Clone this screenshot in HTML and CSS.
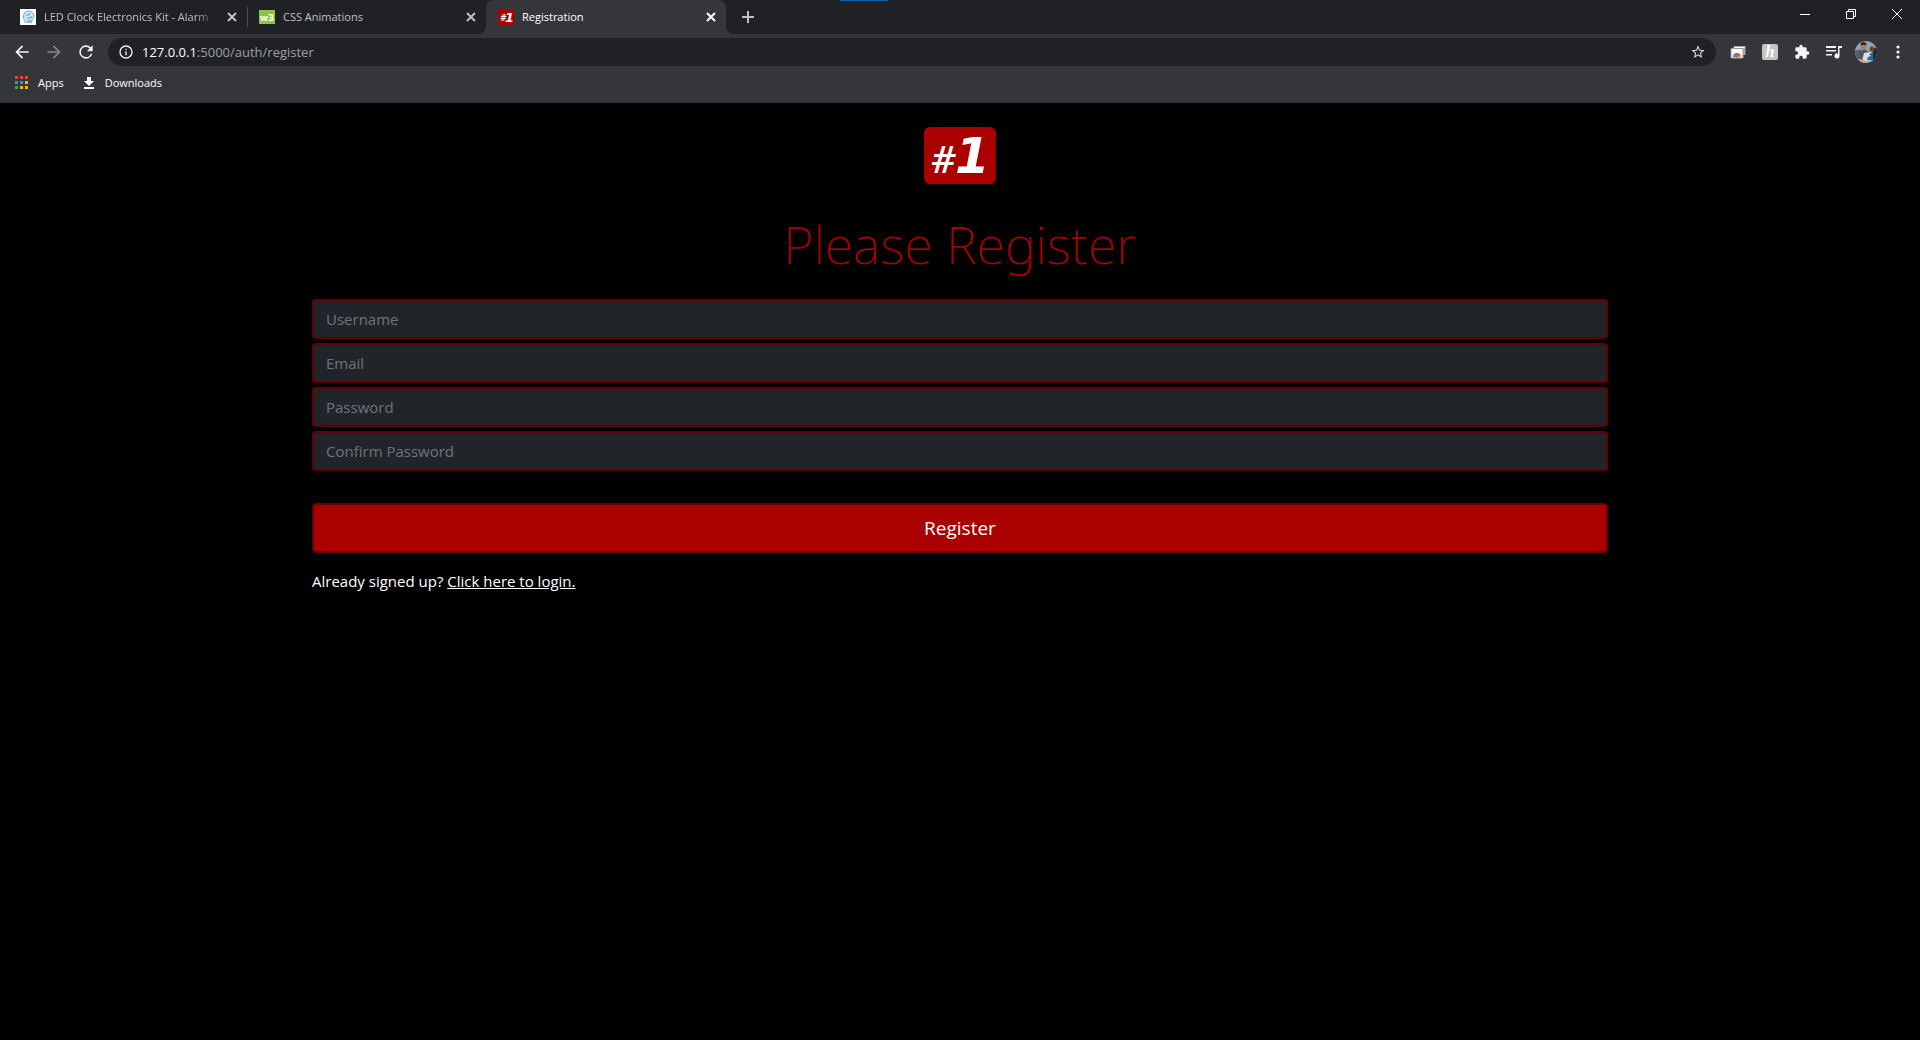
FILE: index.html
```
<!DOCTYPE html>
<html lang="en">
<head>
<meta charset="utf-8">
<meta name="viewport" content="width=device-width, initial-scale=1">
<title>Registration</title>
<link rel="stylesheet" href="styles.css">
</head>
<body>
<header class="browser">
  <span class="accent"></span>
  <div class="strip">
    <div class="tabs">
      <div class="tab">
        <svg class="favicon" viewBox="0 0 16 16"><rect width="16" height="16" fill="#fff"/><path d="M5 14c.5-2-1-3-1.500-5C3 5 5 2 8.500 2S14 4.500 14 7c0 2-1.500 3-2 4l-.5 3" fill="#cfe6f6" stroke="#6fa9d6"/><path d="M6 6h3l1-2M7 9h4l1-2M8 14v-3M10 14v-3" fill="none" stroke="#5b95c8"/></svg>
        <span class="title fade">LED Clock Electronics Kit - Alarm</span>
        <button class="close" aria-label="Close tab"><svg viewBox="0 0 10 10"><path d="M1 1l8 8M9 1L1 9"/></svg></button>
      </div>
      <div class="tab second">
        <svg class="favicon" viewBox="0 0 16 16"><rect width="16" height="14" y="1" fill="#8ac640"/><text class="w3" x="8" y="12" text-anchor="middle">w3</text></svg>
        <span class="title">CSS Animations</span>
        <button class="close" aria-label="Close tab"><svg viewBox="0 0 10 10"><path d="M1 1l8 8M9 1L1 9"/></svg></button>
      </div>
      <div class="tab active">
        <svg class="favicon" viewBox="0 0 16 16"><rect width="16" height="16" rx="2" fill="#a00"/><text class="mark" x="2" y="12" font-size="8">#</text><text class="mark" x="7" y="13" font-size="13">1</text></svg>
        <span class="title">Registration</span>
        <button class="close" aria-label="Close tab"><svg viewBox="0 0 10 10"><path d="M1 1l8 8M9 1L1 9"/></svg></button>
      </div>
      <button class="new-tab" aria-label="New tab"><svg viewBox="0 0 12 12"><path d="M6 0v12M0 6h12"/></svg></button>
    </div>
    <div class="window-buttons">
      <button aria-label="Minimize"><svg viewBox="0 0 12 12"><path d="M1 6.500h10"/></svg></button>
      <button aria-label="Restore"><svg viewBox="0 0 12 12"><path d="M1.500 3.500h7v7h-7zM3.500 3V1.500h7v7H9"/></svg></button>
      <button aria-label="Close"><svg viewBox="0 0 12 12"><path d="M1 1l10 10M11 1L1 11"/></svg></button>
    </div>
  </div>
  <div class="toolbar">
    <nav class="history">
      <button aria-label="Back"><svg viewBox="0 0 24 24"><path d="M20 11H7.830l5.590-5.590L12 4l-8 8 8 8 1.410-1.410L7.830 13H20z"/></svg></button>
      <button class="dim" aria-label="Forward"><svg viewBox="0 0 24 24"><path d="M12 4l-1.410 1.410L16.170 11H4v2h12.170l-5.580 5.590L12 20l8-8z"/></svg></button>
      <button aria-label="Reload"><svg viewBox="0 0 24 24"><path d="M17.650 6.350A8 8 0 1 0 19.730 14h-2.080A6 6 0 1 1 12 6c1.660 0 3.140.69 4.220 1.780L13 11h7V4z"/></svg></button>
    </nav>
    <div class="address">
      <svg viewBox="0 0 24 24"><path d="M11 17h2v-6h-2zm1-15a10 10 0 1 0 0 20 10 10 0 0 0 0-20zm0 18a8 8 0 1 1 0-16 8 8 0 0 1 0 16zM11 9h2V7h-2z"/></svg>
      <div class="url" role="textbox" aria-label="Address">127.0.0.1<span>:5000/auth/register</span></div>
      <button aria-label="Bookmark this page"><svg viewBox="0 0 24 24"><path d="M22 9.240l-7.190-.62L12 2 9.190 8.630 2 9.240l5.460 4.730L5.820 21 12 17.270 18.180 21l-1.630-7.030zM12 15.400l-3.760 2.270 1-4.280-3.320-2.880 4.380-.38L12 6.100l1.710 4.040 4.380.38-3.320 2.880 1 4.280z"/></svg></button>
    </div>
    <div class="extensions">
      <button aria-label="Remote desktop"><svg viewBox="0 0 16 16"><path d="M3.500 2h12v9h-12z" fill="#aaa"/><path d="M4.500 3h10v1h-10z" fill="#fff"/><path d="M1 4.500h12V14H1z" fill="#fff" stroke="#999"/><path d="M3 13a4 4 0 0 1 8 0z" fill="#e84435"/><path d="M3 13l1-2.500L6 13z" fill="#34a853"/><path d="M11 13l-1-2.500L8 13z" fill="#fbbc05"/><circle cx="7" cy="12" r="1.800" fill="#4285f4"/></svg></button>
      <button aria-label="Honey"><svg viewBox="0 0 16 16"><rect width="16" height="16" rx="2" fill="#c4c4c4"/><text class="honey" x="8" y="13" text-anchor="middle">h</text></svg></button>
      <button aria-label="Extensions"><svg viewBox="0 0 24 24"><path d="M20.500 11H19V7a2 2 0 0 0-2-2h-4V3.500a2.500 2.500 0 0 0-5 0V5H4a2 2 0 0 0-2 2v3.800h1.500a2.700 2.700 0 0 1 0 5.400H2V20c0 1.100.9 2 2 2h3.800v-1.500a2.700 2.700 0 0 1 5.400 0V22H17a2 2 0 0 0 2-2v-4h1.500a2.500 2.500 0 0 0 0-5z"/></svg></button>
      <button aria-label="Media controls"><svg viewBox="0 0 16 16"><path d="M0 2h10v2H0zM0 6h10v1.500H0zM0 10h6v1.500H0zM12 2h4v2h-2.500v8a2.500 2.500 0 1 1-1.500-2.300z"/></svg></button>
      <button class="profile" aria-label="Profile"><svg viewBox="0 0 22 22"><defs><clipPath id="disc"><circle cx="11" cy="11" r="11"/></clipPath></defs><g clip-path="url(#disc)"><path fill="#91a4b4" d="M0 0h22v22H0z"/><path fill="#54606a" d="M0 10l5-2 2 4-2 6H0z"/><path fill="#222b32" d="M18 7h4v12h-5z"/><path fill="#50535a" d="M4 11l5-3 5 3 1 8H5z"/><circle cx="8.500" cy="5.500" r="3" fill="#b27961"/><path d="M5.500 4q0-3 3-3t3 3z" fill="#352722"/><path fill="#dedede" d="M9 12l6-1 2 4-3 5H7z"/><circle cx="17" cy="8" r="2.500" fill="#6b3e2a"/><path fill="#1d6e9b" d="M14 13l4-1v7h-6l1-3 3-1z"/><path fill="#dfa083" d="M3 18l6 1 5 3H4z"/></g></svg></button>
      <button aria-label="Menu"><svg viewBox="0 0 16 16"><circle cx="8" cy="3" r="1.600"/><circle cx="8" cy="8" r="1.600"/><circle cx="8" cy="13" r="1.600"/></svg></button>
    </div>
  </div>
  <nav class="bookmarks">
    <a href="#apps"><svg viewBox="0 0 14 14"><path d="M0 0h3v3H0zM5 0h3v3H5zM10 0h3v3h-3z" fill="#ea4335"/><path d="M0 5h3v3H0z" fill="#34a853"/><path d="M5 5h3v3H5z" fill="#2196f3"/><path d="M10 5h3v3h-3zM5 10h3v3H5zM10 10h3v3h-3z" fill="#fbb018"/><path d="M0 10h3v3H0z" fill="#34a853"/></svg>Apps</a>
    <a href="#downloads"><svg viewBox="0 0 14 14"><path d="M5 1h4v4h3L7 10 2 5h3zM2 11h10v2H2z" fill="#fff"/></svg>Downloads</a>
  </nav>
</header>
<main class="page">
  <svg class="logo" viewBox="0 0 72 57" role="img" aria-label="#1"><rect width="72" height="57" rx="6" fill="#a00"/><text class="mark hash" x="7" y="46" font-size="38">#</text><text class="mark" x="31" y="46" font-size="50">1</text></svg>
  <h1>Please Register</h1>
  <form>
    <input type="text" placeholder="Username" aria-label="Username">
    <input type="email" placeholder="Email" aria-label="Email">
    <input type="password" placeholder="Password" aria-label="Password">
    <input type="password" placeholder="Confirm Password" aria-label="Confirm Password">
    <button class="submit" type="submit">Register</button>
  </form>
  <p>Already signed up? <a href="#login">Click here to login.</a></p>
</main>
</body>
</html>
```
FILE: styles.css
```
* { box-sizing: border-box; }

body {
  margin: 0;
  min-height: 100vh;
  background: #000;
  color: #fff;
  font: 15px/24px "Open Sans", "Noto Sans", sans-serif;
}

button {
  margin: 0;
  padding: 0;
  border: 0;
  background: none;
  color: inherit;
  font: inherit;
}

svg { display: block; flex: none; }

/* Browser frame */
.browser {
  position: relative;
  padding-bottom: 7px;
  background: #35363a;
  border-bottom: 1px solid #28292b;
  font-size: 11px;
}

.accent {
  position: absolute;
  top: 0;
  left: 840px;
  width: 48px;
  height: 1px;
  background: #0063b1;
}

.strip {
  display: flex;
  justify-content: space-between;
  height: 34px;
  padding-left: 8px;
  background: #202124;
}

.tabs { display: flex; }

.tab {
  position: relative;
  display: flex;
  align-items: center;
  gap: 8px;
  width: 239px;
  padding: 0 7px 0 12px;
  color: #bdc1c6;
}

.second::before {
  content: "";
  position: absolute;
  left: 0;
  top: 7px;
  width: 1px;
  height: 20px;
  background: #4a4c50;
}

.active {
  width: 240px;
  background: #35363a;
  border-radius: 8px 8px 0 0;
  color: #fff;
}

.active::before,
.active::after {
  content: "";
  position: absolute;
  bottom: 0;
  width: 8px;
  height: 8px;
}

.active::before {
  right: 100%;
  background: radial-gradient(circle at 0 0, #202124 8px, #35363a 8px);
}

.active::after {
  left: 100%;
  background: radial-gradient(circle at 100% 0, #202124 8px, #35363a 8px);
}

.favicon { width: 16px; height: 16px; }
.title { flex: 1; white-space: nowrap; }
.fade { mask-image: linear-gradient(to right, #000 88%, transparent); }
.close { padding: 3px; }
.close svg { width: 10px; height: 10px; }
.close path, .new-tab path { stroke: currentColor; stroke-width: 2; }
.new-tab { margin-left: 16px; color: #bdc1c6; }
.new-tab svg { width: 12px; height: 12px; }

.w3 { fill: #fff; font: bold 9px "DejaVu Sans", sans-serif; }
.mark { fill: #fff; font-family: "DejaVu Sans", sans-serif; font-weight: bold; font-style: italic; }
.hash { font-family: "Open Sans", sans-serif; font-weight: 600; }
.honey { fill: #fff; font: italic bold 16px "Liberation Serif", serif; }

.window-buttons { display: flex; }
.window-buttons button { width: 46px; height: 28px; padding: 0 17px; }
.window-buttons svg { width: 12px; height: 12px; }
.window-buttons path { fill: none; stroke: #fff; }

.toolbar { display: flex; align-items: center; height: 36px; }
.toolbar svg { fill: #f1f3f4; }
.history { display: flex; gap: 12px; padding: 0 12px; }
.history svg { width: 20px; height: 20px; }
.history .dim svg { fill: #85868a; }

.address {
  display: flex;
  flex: 1;
  align-items: center;
  height: 28px;
  padding: 0 10px;
  border-radius: 14px;
  background: #202124;
}

.address svg { width: 16px; height: 16px; }
.address button svg { fill: #dadce0; }
.url { flex: 1; padding-left: 8px; font-size: 13px; }
.url span { color: #9aa0a6; }

.extensions { display: flex; align-items: center; gap: 16px; padding: 0 14px; }
.extensions svg { width: 16px; height: 16px; }
.extensions .profile { margin: 0 -3px; }
.extensions .profile svg { width: 22px; height: 22px; }

.bookmarks { display: flex; gap: 16px; padding: 1px 15px 0; }
.bookmarks a { display: flex; align-items: center; gap: 9px; color: #fff; text-decoration: none; }
.bookmarks svg { width: 14px; height: 14px; }
.bookmarks a + a { margin-left: 2px; }

/* Registration page */
.page { max-width: 1320px; margin: 0 auto; padding: 24px 12px; }
.logo { width: 72px; height: 57px; margin: 0 auto; }

h1 {
  margin: 24px 0 20px;
  color: #a00;
  font: 200 52px/71px "Noto Sans", "Open Sans", sans-serif;
  text-align: center;
}

form { display: flex; flex-direction: column; gap: 4px; }

input {
  width: 100%;
  height: 40px;
  padding: 0 12px;
  border: 2px solid #600;
  border-radius: 4px;
  background: #212529;
  color: #fff;
  font: inherit;
}

input::placeholder { color: #6c757d; opacity: 1; }

.submit {
  height: 50px;
  margin-top: 28px;
  border: 2px solid #600;
  border-radius: 4px;
  background: #a00;
  font-size: 19px;
}

p { margin: 16px 0; }
p a { color: #fff; }
```
